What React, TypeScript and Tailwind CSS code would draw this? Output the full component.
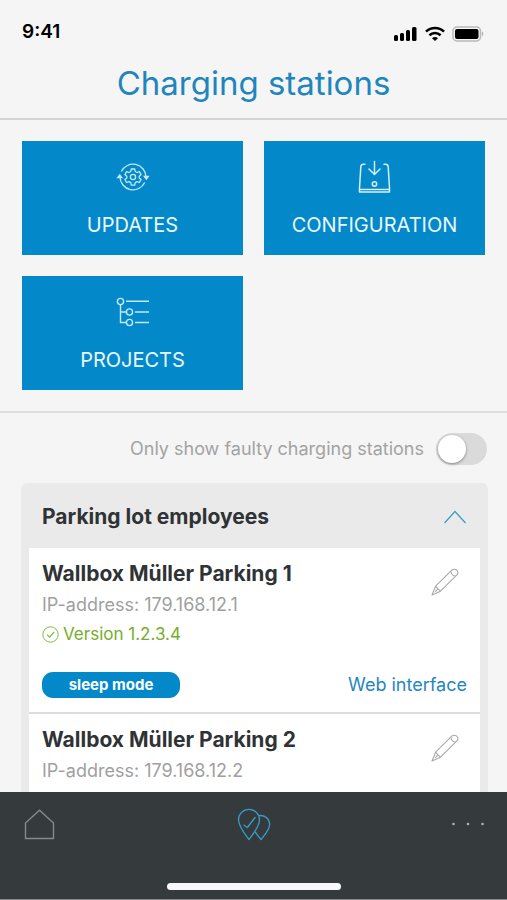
import { useState } from "react";
import type { ReactNode } from "react";

function SignalIcon() {
  return (
    <svg width="24" height="16" viewBox="0 0 24 16" fill="#000" aria-hidden="true">
      <rect x="0" y="9" width="4" height="6" rx="1.5" />
      <rect x="6" y="7" width="4" height="8" rx="1.5" />
      <rect x="12" y="4" width="4" height="11" rx="1.5" />
      <rect x="18" y="1" width="4.5" height="14" rx="1.5" />
    </svg>
  );
}

function WifiIcon() {
  return (
    <svg width="20" height="16" viewBox="0 0 20 16" fill="none" stroke="#000" strokeWidth="2.6" aria-hidden="true">
      <path d="M1 5.6C6.2.7 13.8.7 19 5.6" />
      <path d="M4.4 9.2c3.2-2.9 8-2.9 11.2 0" />
      <path d="M7 12.3c1.7-1.7 4.3-1.7 6 0l-3 2.8z" fill="#000" stroke="none" />
    </svg>
  );
}

function BatteryIcon() {
  return (
    <svg width="32" height="16" viewBox="0 0 32 16" aria-hidden="true">
      <rect x="1" y="1" width="27.5" height="14" rx="4" fill="none" stroke="#b9b9b9" strokeWidth="1.5" />
      <rect x="3" y="3" width="23.5" height="10" rx="2" fill="#000" />
      <path d="M30 5.6v4.6c1.8-.8 1.8-3.8 0-4.6z" fill="#b0b0b0" />
    </svg>
  );
}

function UpdatesIcon() {
  return (
    <svg width="36" height="36" viewBox="0 0 36 36" fill="none" stroke="#c4e8f8" strokeWidth="1.3" aria-hidden="true">
      <path d="M6.3 12.5A13 13 0 0 1 31 18M29.7 23.500A13 13 0 0 1 5 18" />
      <path d="M29.300 17.500h4l-2 2.600zM2.700 18.500h4l-2-2.600z" fill="#c4e8f8" />
      <circle cx="18" cy="18" r="2.600" />
      <path d="M16.300 10h3.400l.5 2.500 1.800 1 2.400-.9 1.700 3-1.900 1.600v1.700l1.900 1.600-1.700 3-2.400-.9-1.800 1-.5 2.500h-3.400l-.5-2.500-1.800-1-2.400.9-1.700-3 1.900-1.600v-1.700l-1.900-1.600 1.700-3 2.400.9 1.800-1z" strokeLinejoin="round" />
    </svg>
  );
}

function ConfigurationIcon() {
  return (
    <svg width="36" height="36" viewBox="0 0 36 36" fill="none" stroke="#d5effb" strokeWidth="1.5" strokeLinecap="round" strokeLinejoin="round" aria-hidden="true">
      <path d="M8 5.200H6.500Q4 5.200 3.800 7.800L2.500 29.500V33h30v-3.500L31.200 7.800q-.2-2.600-2.700-2.600H27" />
      <path d="M3 30.500h29" />
      <path d="M17.500 2.500v12.500M12 10l5.500 5.500L23 10" />
      <circle cx="17.500" cy="25" r="2.200" />
    </svg>
  );
}

function ProjectsIcon() {
  return (
    <svg width="36" height="36" viewBox="0 0 36 36" fill="none" stroke="#c4e8f8" strokeWidth="1.4" aria-hidden="true">
      <circle cx="5.500" cy="7.500" r="3.100" />
      <circle cx="14.500" cy="18" r="3.100" />
      <circle cx="14.500" cy="28.500" r="3.100" />
      <path d="M11 7.200h23M20 18h14M20 28.500h14M5.500 10.600v17.900h6M5.500 18h6" />
    </svg>
  );
}

function PencilIcon() {
  return (
    <svg width="28" height="28" viewBox="0 0 28 28" fill="none" stroke="#a9a9a9" strokeWidth="1.1" strokeLinejoin="round" aria-hidden="true">
      <path d="M1 27l3.600-8.800L20.800 2.200a3.400 3.400 0 0 1 4.900 4.900L9.500 23.200z" />
      <path d="M4.600 18.200l2.300 2.700 2.600 2.300M19.800 3.200a5.600 5.600 0 0 0 4.900 4.900M6.900 20.900l-2.700 3" />
    </svg>
  );
}

function CheckCircleIcon() {
  return (
    <svg width="17" height="17" viewBox="0 0 17 17" fill="none" stroke="#82b93f" strokeWidth="1" aria-hidden="true">
      <circle cx="8.5" cy="8.5" r="7.700" />
      <path d="M5 8.600l2.600 2.500L12.100 6" strokeWidth="1.200" />
    </svg>
  );
}

function Tile({ label, children }: { label: string; children: ReactNode }) {
  return (
    <button type="button" className="flex h-[114px] flex-col items-center bg-[#0389c9] pt-[18px] text-[20px] leading-6 text-[#eaf7fd]">
      {children}
      <span className="mt-[18px]">{label}</span>
    </button>
  );
}

function Station({ name, ip, version }: { name: string; ip: string; version: string }) {
  return (
    <li className="border-b-2 border-[#dcdcdc] bg-white px-[13px] pt-3 pb-[14px]">
      <div className="flex items-start justify-between">
        <div>
          <h3 className="text-[21px] leading-7 font-bold text-[#2f3335]">{name}</h3>
          <p className="mt-[3px] text-[18px] leading-7 text-[#a0a0a0]">IP-address: {ip}</p>
          <p className="mt-px flex items-center gap-1 text-[17px] leading-7 text-[#74ae2b]">
            <CheckCircleIcon />
            Version {version}
          </p>
        </div>
        <button type="button" aria-label={`Edit ${name}`} className="mt-2 mr-2">
          <PencilIcon />
        </button>
      </div>
      <div className="mt-6 flex items-center justify-between">
        <span className="w-[138px] rounded-[11px] bg-[#0389c9] text-center text-[15px] leading-[26px] font-bold text-white">sleep mode</span>
        <a href="#web" className="text-[18px] leading-[26px] text-[#1f86bf]">Web interface</a>
      </div>
    </li>
  );
}

export default function App() {
  const [faulty, setFaulty] = useState(false);
  const [open, setOpen] = useState(true);
  return (
    <div className="flex h-screen flex-col bg-[#f5f5f5] font-['Inter',sans-serif]">
      <header className="border-b-2 border-[#d5d5d5]">
        <div className="flex items-center justify-between pt-5 pr-[23px] pl-[22px]">
          <span className="text-[19px] leading-6 font-semibold text-black">9:41</span>
          <div className="flex items-center gap-[7px] pt-[3px]">
            <SignalIcon />
            <WifiIcon />
            <BatteryIcon />
          </div>
        </div>
        <h1 className="mt-[19px] pb-[15px] text-center text-[33px] leading-10 text-[#1f86bd]">Charging stations</h1>
      </header>

      <main className="min-h-0 flex-1 overflow-y-auto [scrollbar-width:none]">
        <div className="grid grid-cols-2 gap-[21px] border-b-2 border-[#dedede] px-[22px] py-[21px]">
          <Tile label="UPDATES"><UpdatesIcon /></Tile>
          <Tile label="CONFIGURATION"><ConfigurationIcon /></Tile>
          <Tile label="PROJECTS"><ProjectsIcon /></Tile>
        </div>

        <label className="flex items-center justify-end gap-3 px-5 pt-5 pb-[18px] text-[18px] leading-8 text-[#a3a3a3]">
          Only show faulty charging stations
          <input
            type="checkbox"
            role="switch"
            checked={faulty}
            onChange={(e) => setFaulty(e.target.checked)}
            className="h-8 w-[51px] appearance-none rounded-full bg-[#dadada] p-[2px] before:block before:size-7 before:rounded-full before:bg-white before:shadow-[0_1px_3px_rgba(0,0,0,0.4)] before:content-[''] checked:bg-[#0389c9] checked:before:ml-[19px]"
          />
        </label>

        <section className="mr-[19px] ml-[21px] rounded-md bg-[#eaeaea] px-2 pb-2">
          <h2>
            <button type="button" aria-expanded={open} onClick={() => setOpen(!open)} className="flex h-[65px] w-full items-center justify-between px-[13px] pt-0.5 text-[21px] leading-7 font-bold text-[#2f3335]">
              Parking lot employees
              <svg width="24" height="14" viewBox="0 0 24 14" fill="none" stroke="#3a9cc6" strokeWidth="1.200" aria-hidden="true">
                <path d="M1.500 13L12 1.500 22.500 13" />
              </svg>
            </button>
          </h2>
          {open && (
            <ul>
              <Station name="Wallbox Müller Parking 1" ip="179.168.12.1" version="1.2.3.4" />
              <Station name="Wallbox Müller Parking 2" ip="179.168.12.2" version="1.2.3.4" />
            </ul>
          )}
        </section>
      </main>

      <nav className="border-b border-[#858888] bg-[#353b3d] pb-[9px]">
        <div className="flex items-start justify-between pt-4 pr-[22px] pl-6">
          <button type="button" aria-label="Home">
            <svg width="32" height="32" viewBox="0 0 32 32" fill="none" stroke="#858989" strokeWidth="1.400" aria-hidden="true">
              <path d="M1.500 30.500V15L15.500 2.200 29.500 15v15.500z" />
            </svg>
          </button>
          <button type="button" aria-label="Charging stations">
            <svg width="34" height="34" viewBox="0 0 34 34" fill="none" stroke="#3a9cc6" strokeWidth="1.300" strokeLinejoin="round" aria-hidden="true">
              <path d="M12 31.500C7.500 25.500 1.500 18.500 1.500 11.800a10.500 10.500 0 0 1 21 0c0 6.700-6 13.700-10.500 19.700z" />
              <path d="M7 17.200l3.400 2.300L18 9.500" strokeLinecap="round" />
              <path d="M22 7.600c5.500-.8 10.600 3.200 10.600 8.900 0 5.500-5 10.500-8.600 15-2.200-2.800-4.200-5.200-5.800-7.700" />
            </svg>
          </button>
          <button type="button" aria-label="More">
            <svg width="34" height="32" viewBox="0 0 34 32" fill="#aeb1b1" aria-hidden="true">
              <circle cx="2.500" cy="16" r="1.300" />
              <circle cx="17" cy="16" r="1.300" />
              <circle cx="31.500" cy="16" r="1.300" />
            </svg>
          </button>
        </div>
        <div className="mx-auto mt-[41px] h-[7px] w-[174px] rounded-full bg-[#f7f7fc]" />
      </nav>
    </div>
  );
}
